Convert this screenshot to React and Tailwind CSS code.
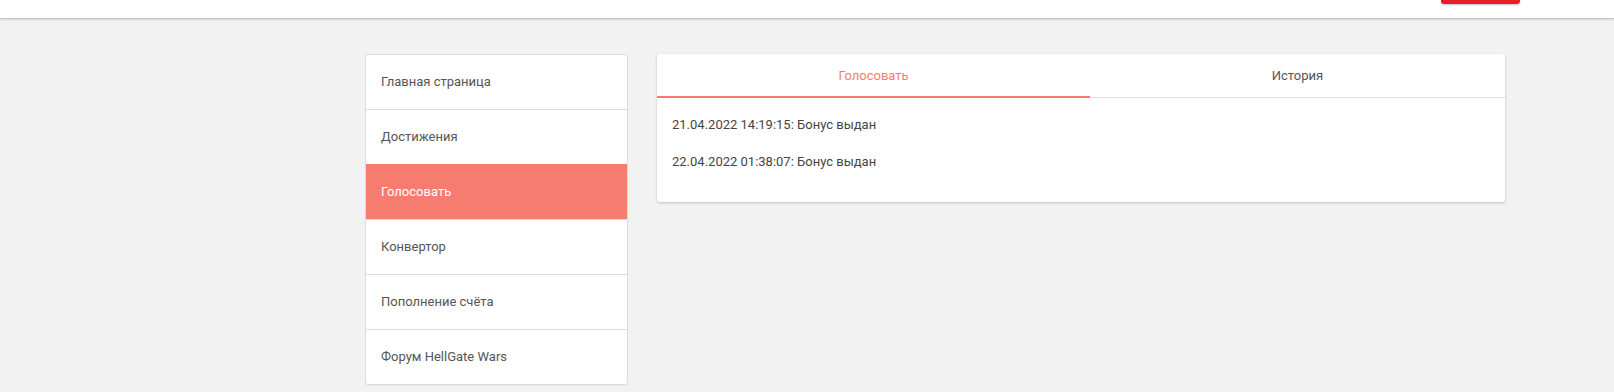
export default function App() {
  const menu = [
    "Главная страница",
    "Достижения",
    "Голосовать",
    "Конвертор",
    "Пополнение счёта",
    "Форум HellGate Wars",
  ];
  const log = [
    "21.04.2022 14:19:15: Бонус выдан",
    "22.04.2022 01:38:07: Бонус выдан",
  ];

  return (
    <div className="min-h-[392px] bg-[#f2f2f2] font-['Roboto','Liberation_Sans',sans-serif]">
      {/* Header */}
      <header className="h-[19px] bg-white border-b border-[#c4c4c4] shadow-[0_1px_2px_rgba(0,0,0,0.12)]">
        <div className="ml-[1441px] w-[79px] h-[4px] bg-[#e81f27] rounded-b-[3px] shadow-[0_1px_2px_rgba(0,0,0,0.25)]" />
      </header>

      <div className="flex items-start gap-[29px] pl-[365px] pt-[35px]">
        {/* Sidebar menu */}
        <nav className="w-[263px] bg-white border border-[#dcdcdc] rounded-[3px] shadow-[0_1px_1px_rgba(0,0,0,0.04)] overflow-hidden">
          {menu.map((item, i) => (
            <div
              key={item}
              className={
                "flex items-center pl-[15px] text-[13px] " +
                (i > 0 ? "h-[55px] border-t border-[#dcdcdc] " : "h-[54px] ") +
                (item === "Голосовать"
                  ? "bg-[#f77c70] text-white border-[#f77c70]"
                  : "text-[#555]")
              }
            >
              {item}
            </div>
          ))}
        </nav>

        {/* Main card */}
        <section className="w-[848px] bg-white rounded-[3px] shadow-[0_1px_3px_rgba(0,0,0,0.22)]">
          <div className="flex border-b border-[#dedede]">
            <div className="relative w-[433px] h-[43px] flex items-center justify-center text-[13px] text-[#f77c70]">
              Голосовать
              <span className="absolute left-0 right-0 bottom-[-1px] h-[2px] bg-[#f77c70]" />
            </div>
            <div className="flex-1 h-[43px] flex items-center justify-center text-[13px] text-[#555]">
              История
            </div>
          </div>
          <div className="pt-[8px] pb-[22px] px-[15px]">
            {log.map((row) => (
              <div key={row} className="h-[37px] flex items-center text-[13px] text-[#444]">
                {row}
              </div>
            ))}
          </div>
        </section>
      </div>
    </div>
  );
}
